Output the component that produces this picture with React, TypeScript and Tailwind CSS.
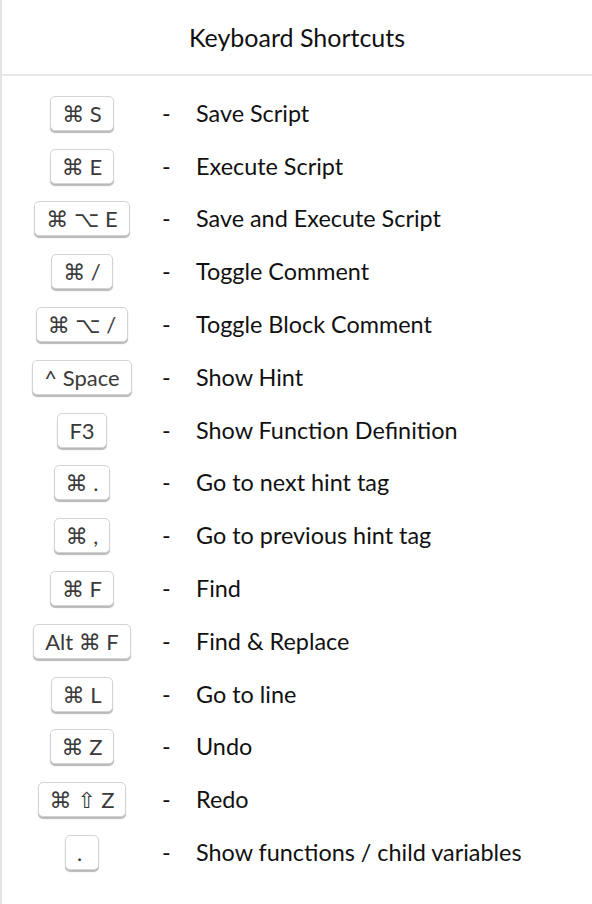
import React from "react"

interface Shortcut {
  keys: string
  label: string
}

const SHORTCUTS: Shortcut[] = [
  { keys: "⌘ S", label: "Save Script" },
  { keys: "⌘ E", label: "Execute Script" },
  { keys: "⌘ ⌥ E", label: "Save and Execute Script" },
  { keys: "⌘ /", label: "Toggle Comment" },
  { keys: "⌘ ⌥ /", label: "Toggle Block Comment" },
  { keys: "^ Space", label: "Show Hint" },
  { keys: "F3", label: "Show Function Definition" },
  { keys: "⌘ .", label: "Go to next hint tag" },
  { keys: "⌘ ,", label: "Go to previous hint tag" },
  { keys: "⌘ F", label: "Find" },
  { keys: "Alt ⌘ F", label: "Find & Replace" },
  { keys: "⌘ L", label: "Go to line" },
  { keys: "⌘ Z", label: "Undo" },
  { keys: "⌘ ⇧ Z", label: "Redo" },
  { keys: ".", label: "Show functions / child variables" },
]

function Key({ children }: { children: React.ReactNode }) {
  return (
    <span className="inline-block h-[35px] min-w-[34px] px-[11px] rounded-[5px] border border-[#d4d4d4] bg-white text-[22px] leading-[33px] text-[#3a3a3a] shadow-[0_2px_1px_#b9b9b9] [font-family:Lato,'DejaVu_Sans',sans-serif]">
      {children}
    </span>
  )
}

export default function App() {
  return (
    <div className="min-h-[904px] w-[592px] bg-white border-l-2 border-[#e4e4e4] text-[#111] [font-family:Lato,'DejaVu_Sans',sans-serif]">
      {/* header */}
      <div className="h-[76px] border-b-2 border-[#e8e8e8] flex items-center justify-center">
        <h2 className="text-[25px] pt-[1px] text-[#111]">Keyboard Shortcuts</h2>
      </div>

      {/* shortcut list */}
      <div className="pt-[11px]">
        {SHORTCUTS.map((s) => (
          <div key={s.label} className="flex items-center h-[52.8px]">
            <div className="w-[160px] flex justify-center">
              <Key>{s.keys}</Key>
            </div>
            <div className="w-[34px] text-[23.4px]">-</div>
            <div className="text-[23.4px]">{s.label}</div>
          </div>
        ))}
      </div>
    </div>
  )
}
